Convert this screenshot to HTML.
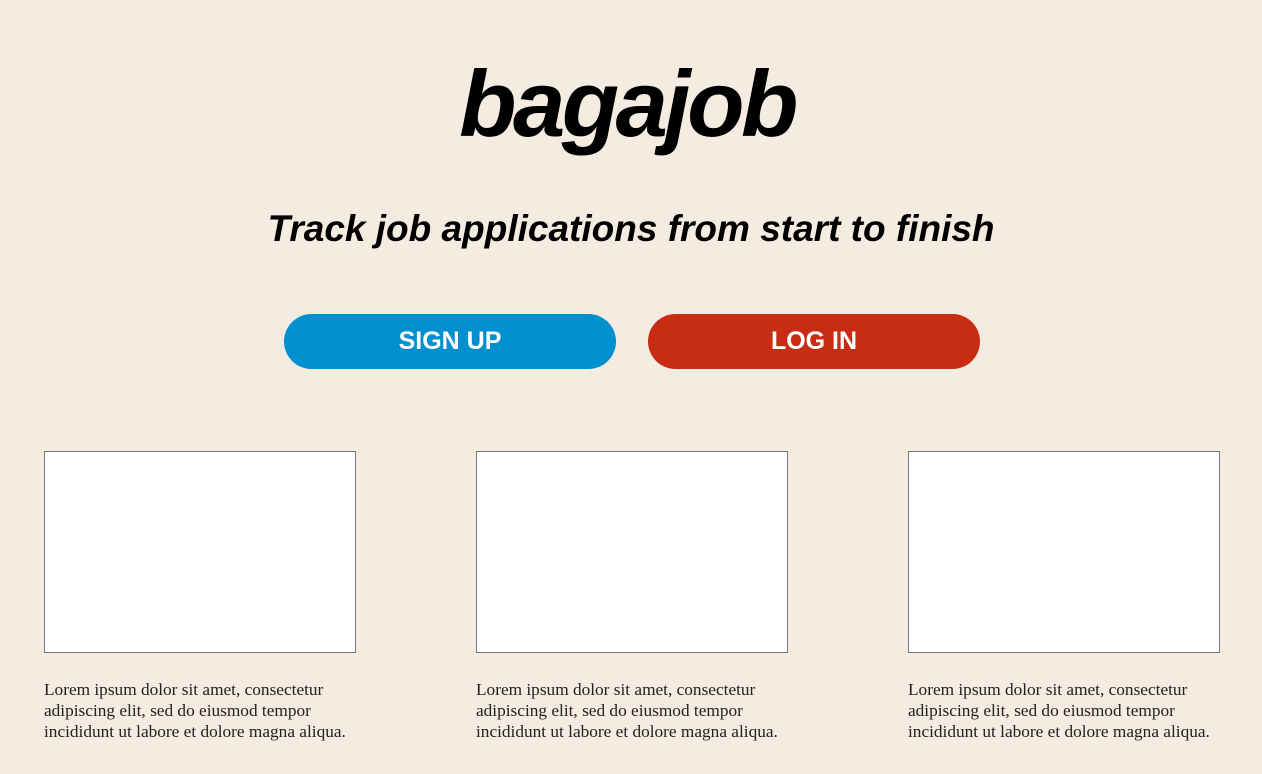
<!DOCTYPE html>
<html><head><meta charset="utf-8"><style>
html,body{margin:0;padding:0;}
body{width:1262px;height:774px;background:#f4ece0;position:relative;overflow:hidden;font-family:"Liberation Sans",sans-serif;}
.logo{position:absolute;left:-4px;width:1262px;top:44px;text-align:center;font-size:94px;font-weight:bold;font-style:italic;color:#000;line-height:120px;letter-spacing:-3.5px;}
.sub{position:absolute;left:0;width:1262px;top:205px;text-align:center;font-size:37px;font-weight:bold;font-style:italic;color:#000;line-height:48px;}
.btn{position:absolute;top:314px;width:332px;height:55px;border-radius:28px;color:#fff;font-weight:bold;font-size:25px;line-height:55px;text-align:center;}
.card{position:absolute;top:451px;width:310px;height:200px;background:#fff;border:1px solid #777;}
.txt{position:absolute;top:679px;width:360px;font-family:"Liberation Serif",serif;font-size:17.3px;line-height:21px;color:#222;}
</style></head><body>
<div class="logo">bagajob</div>
<div class="sub">Track job applications from start to finish</div>
<div class="btn" style="left:284px;background:#0090d0">SIGN UP</div>
<div class="btn" style="left:648px;background:#c82c13">LOG IN</div>
<div class="card" style="left:44px"></div>
<div class="card" style="left:476px"></div>
<div class="card" style="left:908px"></div>
<div class="txt" style="left:44px">Lorem ipsum dolor sit amet, consectetur<br>adipiscing elit, sed do eiusmod tempor<br>incididunt ut labore et dolore magna aliqua.</div>
<div class="txt" style="left:476px">Lorem ipsum dolor sit amet, consectetur<br>adipiscing elit, sed do eiusmod tempor<br>incididunt ut labore et dolore magna aliqua.</div>
<div class="txt" style="left:908px">Lorem ipsum dolor sit amet, consectetur<br>adipiscing elit, sed do eiusmod tempor<br>incididunt ut labore et dolore magna aliqua.</div>
</body></html>
